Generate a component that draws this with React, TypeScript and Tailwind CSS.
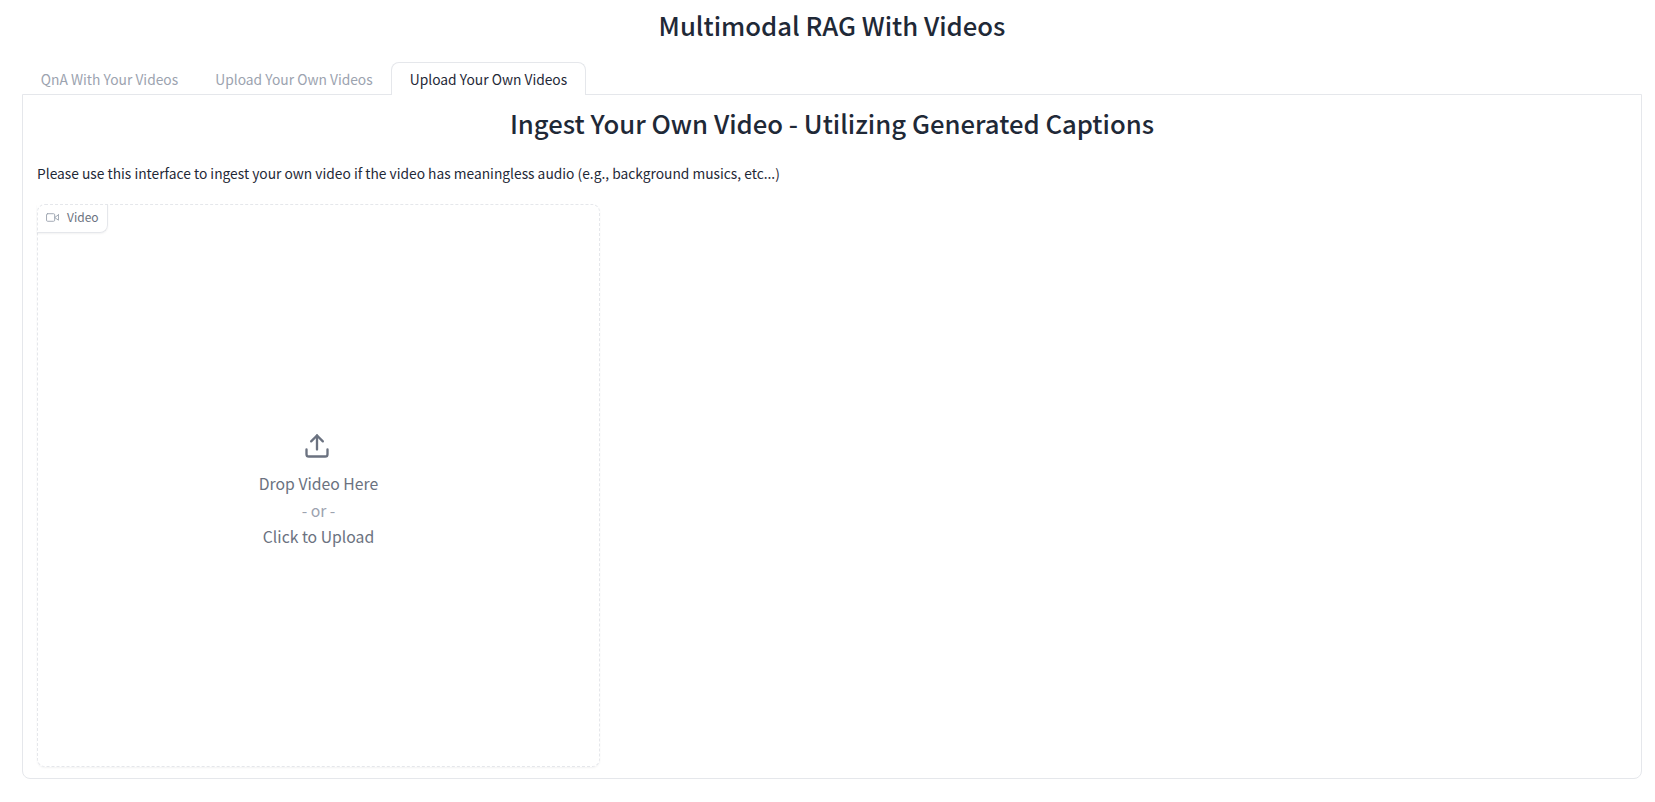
export default function App() {
  const tab = "flex items-center justify-center border border-b-0 text-[13.8px] whitespace-nowrap";
  return (
    <div className="flex h-[802px] flex-col bg-white pl-[22px] pr-[13px] pt-[8px] font-['Noto_Sans_CJK_SC','Noto_Sans',sans-serif] text-[#1f2937]">
      <h1 className="text-center text-[25.7px] font-medium leading-[34px]">Multimodal RAG With Videos</h1>
      <div className="mt-[20px] flex">
        <div className={tab + " h-[32px] w-[175px] border-transparent pt-[2px] text-[#9ca3af]"}>QnA With Your Videos</div>
        <div className={tab + " h-[32px] w-[194px] border-transparent pt-[2px] text-[#9ca3af]"}>Upload Your Own Videos</div>
        <div className={tab + " relative -mb-px h-[33px] w-[195px] rounded-t-lg border-[#e5e7eb] bg-white pt-px"}>Upload Your Own Videos</div>
      </div>
      <div className="h-[685px] rounded-b-lg border border-[#e5e7eb] px-[14px] pt-[11px]">
        <h1 className="text-center text-[25.7px] font-medium leading-[34px]">Ingest Your Own Video - Utilizing Generated Captions</h1>
        <p className="mt-[21px] text-[13.79px] leading-[24px]">Please use this interface to ingest your own video if the video has meaningless audio (e.g., background musics, etc...)</p>
        <div className="relative mt-[19px] flex h-[563px] w-[563px] flex-col items-center justify-center rounded-lg border border-dashed border-[#e5e7eb] pt-[12px] text-[15.75px] leading-[26.4px] text-[#6b7280] shadow-[0_1px_2px_0_rgba(0,0,0,0.05)]">
          <div className="absolute -left-px -top-px flex h-[29px] w-[71px] items-center rounded-br-lg border-b border-r border-[#e5e7eb] pl-[9px] pb-[2px] text-[12px] shadow-[0_1px_2px_0_rgba(0,0,0,0.05)]">
            <svg className="mr-[8px] mt-px h-[13px] w-[13px] text-[#9ca3af]" viewBox="0 0 24 24" fill="none" stroke="currentColor" strokeWidth="1.7" strokeLinecap="round" strokeLinejoin="round">
              <polygon points="23 7 16 12 23 17 23 7" />
              <rect x="1" y="5" width="15" height="14" rx="2" />
            </svg>
            Video
          </div>
          <svg className="mb-[11px] mr-[3px] h-[28px] w-[28px]" viewBox="0 0 24 24" fill="none" stroke="currentColor" strokeWidth="2" strokeLinecap="round" strokeLinejoin="round">
            <path d="M21 15v4a2 2 0 0 1-2 2H5a2 2 0 0 1-2-2v-4" />
            <polyline points="17 8 12 3 7 8" />
            <line x1="12" y1="3" x2="12" y2="15" />
          </svg>
          <div>Drop Video Here</div>
          <div className="text-[#9ca3af]">- or -</div>
          <div>Click to Upload</div>
        </div>
      </div>
    </div>
  );
}
